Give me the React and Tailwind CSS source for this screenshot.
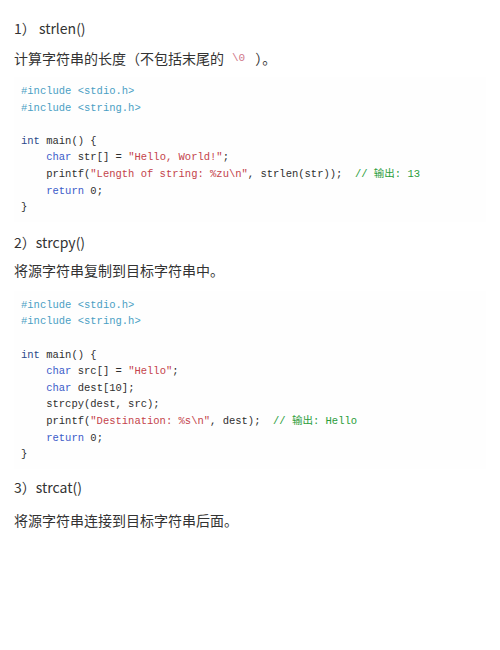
import React from 'react';

const PP = 'text-[#4a9fc4]';
const KW = 'text-[#3b5bc9]';
const TY = 'text-[#2b4a8a]';
const ST = 'text-[#c4434b]';
const CM = 'text-[#2a9d3a]';

const Code = ({ lines }) => (
    <pre className="bg-[#fefefe] mx-[14px] px-[7px] py-[6px] text-[10.5px] leading-[16.6px] text-[#2e2e2e] font-['Liberation_Mono','Noto_Sans_CJK_SC',monospace]">
        {lines.map((line, i) => (
            <div key={i} className="h-[16.6px] whitespace-pre">{line}</div>
        ))}
    </pre>
);

const block1 = [
    <span className={PP}>#include &lt;stdio.h&gt;</span>,
    <span className={PP}>#include &lt;string.h&gt;</span>,
    '',
    <><span className={TY}>int</span> main() {'{'}</>,
    <>    <span className={KW}>char</span> str[] = <span className={ST}>"Hello, World!"</span>;</>,
    <>    printf(<span className={ST}>"Length of string: %zu\n"</span>, strlen(str));  <span className={CM}>// 输出: 13</span></>,
    <>    <span className={KW}>return</span> 0;</>,
    '}',
];

const block2 = [
    <span className={PP}>#include &lt;stdio.h&gt;</span>,
    <span className={PP}>#include &lt;string.h&gt;</span>,
    '',
    <><span className={TY}>int</span> main() {'{'}</>,
    <>    <span className={KW}>char</span> src[] = <span className={ST}>"Hello"</span>;</>,
    <>    <span className={KW}>char</span> dest[10];</>,
    <>    strcpy(dest, src);</>,
    <>    printf(<span className={ST}>"Destination: %s\n"</span>, dest);  <span className={CM}>// 输出: Hello</span></>,
    <>    <span className={KW}>return</span> 0;</>,
    '}',
];

export default function App() {
    return (
        <div className="w-[500px] h-[650px] bg-white text-[#333] font-['Noto_Sans_CJK_SC','Noto_Sans',sans-serif] text-[14px] pt-[18px]">
            <p className="px-[14px] h-[20px] leading-[20px]">1）&nbsp;strlen()</p>
            <p className="px-[14px] mt-[10px] h-[20px] leading-[20px] flex items-center whitespace-pre">
                <span>计算字符串的长度（不包括末尾的</span>
                <span className="ml-[8px] mr-[10px] text-[#d0788a] font-['Liberation_Mono',monospace] text-[11px]">\0</span>
                <span>）。</span>
            </p>
            <div className="mt-[9px]">
                <Code lines={block1} />
            </div>
            <p className="px-[14px] mt-[10px] h-[20px] leading-[20px]">2）strcpy()</p>
            <p className="px-[14px] mt-[8px] h-[20px] leading-[20px]">将源字符串复制到目标字符串中。</p>
            <div className="mt-[11px]">
                <Code lines={block2} />
            </div>
            <p className="px-[14px] mt-[8px] h-[20px] leading-[20px]">3）strcat()</p>
            <p className="px-[14px] mt-[13px] h-[20px] leading-[20px]">将源字符串连接到目标字符串后面。</p>
        </div>
    );
}
